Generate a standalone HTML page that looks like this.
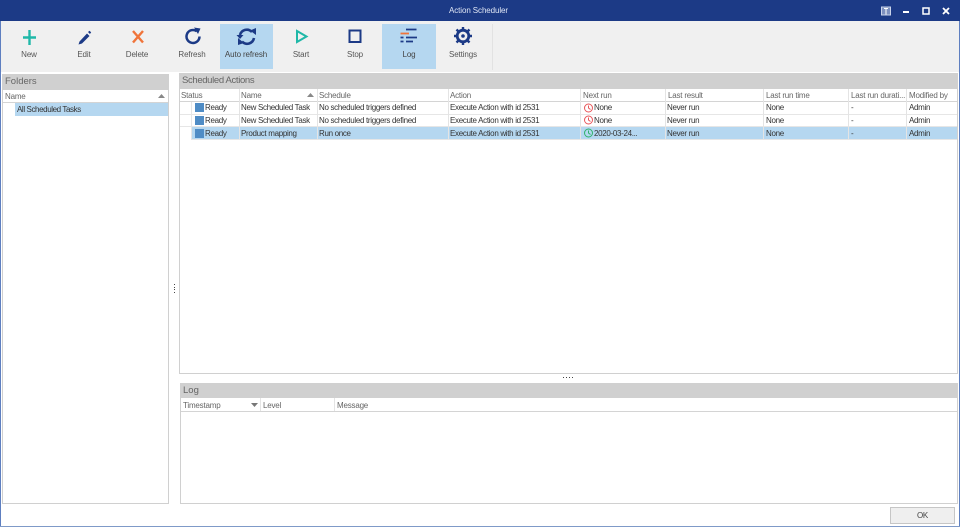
<!DOCTYPE html>
<html><head><meta charset="utf-8"><title>Action Scheduler</title>
<style>
html,body{margin:0;padding:0;background:#fff}
#p{position:relative;width:960px;height:527px;overflow:hidden;background:#fff;font:8px/12px "Liberation Sans",sans-serif;letter-spacing:-.32px;color:#333;filter:blur(.3px)}
#p div{position:absolute;white-space:nowrap}
#p svg{position:absolute;overflow:visible}
.tb{text-align:center;color:#555;top:49px;width:54px;height:12px;letter-spacing:-.12px}
.sel{background:#b5d7f0}
.hd{background:#d0d0d0;color:#666;font-size:9.5px;line-height:15px;padding-left:3px;letter-spacing:-.35px}
.c{color:#666;top:90px;height:12px;line-height:12px;letter-spacing:-.2px}
.v{width:1px;background:#e4e4e4}
.h{height:1px;background:#d4d4d4}
.r{color:#333}
.sq{background:#4f8cc5;width:9px;height:9px}
.line{position:absolute;border:1px solid #d0d0d0;box-sizing:border-box;background:#fff}
</style></head><body><div id="p">
<div style="left:0;top:0;width:960px;height:21px;background:#1c3a86"></div>
<div style="left:0;top:21px;width:1px;height:506px;background:#5e7fc0"></div>
<div style="left:959px;top:21px;width:1px;height:506px;background:#5e7fc0"></div>
<div style="left:0;top:526px;width:960px;height:1px;background:#7f9ac8"></div>
<div style="left:0;top:5px;width:957px;text-align:center;color:#dfe6f5;height:12px;letter-spacing:-.1px">Action Scheduler</div>

<svg width="960" height="21" style="left:0;top:0">
<rect x="881.500" y="7" width="9" height="8" fill="#7d90bf" stroke="#c9d3ea"/>
<path d="M886 8.500v6M884 8.500h4" stroke="#fff" fill="none"/>
<path d="M903 12h6" stroke="#fff" stroke-width="2" fill="none"/>
<rect x="923" y="8" width="6" height="6" fill="none" stroke="#fff" stroke-width="1.500"/>
<path d="M943 8l6 6M949 8l-6 6" stroke="#fff" stroke-width="1.800" fill="none"/>
</svg>

<div style="left:1px;top:21px;width:958px;height:51px;background:#f0f0f0"></div>
<div style="left:492px;top:24px;width:1px;height:46px;background:#e2e2e2"></div>
<div class="sel" style="left:220px;top:24px;width:53px;height:45px"></div>
<div class="sel" style="left:382px;top:24px;width:54px;height:45px"></div>

<svg width="500" height="50" style="left:0;top:22px">
<path d="M29.500 8v15M23 15.500h13" stroke="#1fb8a8" stroke-width="2.400" fill="none"/>
<path d="M79.500 19.500l7.500-8 2.500 2.500-7.500 7.500-3.500 1z" fill="#1c3a86"/><path d="M88 10l1.500-1.300 1.700 1.700-1.300 1.600z" fill="#1c3a86"/>
<path d="M133 9l10 11.500M143 9l-10 11.500" stroke="#f0743a" stroke-width="2.400" fill="none"/>
<path d="M199.500 14.500a6.500 6.500 0 1 1-2.700-5.300" stroke="#1c3a86" stroke-width="2.500" fill="none"/>
<path d="M194 5.500l6.500 1-2.500 5.500z" fill="#1c3a86"/>
<path d="M240 13a7 7 0 0 1 12-3M254 16a7 7 0 0 1-12 3.500" stroke="#1c3a86" stroke-width="2.600" fill="none"/>
<path d="M250 8.500l6-2.500v7zM244 21l-6 2v-7z" fill="#1c3a86"/>
<path d="M236.500 13l3.500 4 3.500-4z" fill="#1c3a86"/>
<path d="M297 9l9.500 5.500-9.500 5.500z" fill="none" stroke="#1fb8a8" stroke-width="2"/>
<rect x="349.500" y="8.500" width="11" height="11.500" fill="none" stroke="#1c3a86" stroke-width="2"/>
<path d="M406 7.500h10.500M406 15.500h11M406 19.500h7M400.500 15.500h3M400.500 19.500h3" stroke="#1c3a86" stroke-width="1.800" fill="none"/>
<path d="M400.500 11.500h8.500" stroke="#f0743a" stroke-width="1.800" fill="none"/>
<circle cx="463" cy="14" r="5.800" fill="none" stroke="#1c3a86" stroke-width="2.800"/>
<circle cx="463" cy="14" r="1.800" fill="#1c3a86"/>
<path d="M463 5v3M463 20v3M454 14h3M469 14h3M456.500 7.500l2 2M467.500 18.500l2 2M469.500 7.500l-2 2M458.500 18.500l-2 2" stroke="#1c3a86" stroke-width="2.400" fill="none"/>
</svg>
<div class="tb" style="left:2px">New</div>
<div class="tb" style="left:57px">Edit</div>
<div class="tb" style="left:110px">Delete</div>
<div class="tb" style="left:165px">Refresh</div>
<div class="tb" style="left:219px;color:#444">Auto refresh</div>
<div class="tb" style="left:274px">Start</div>
<div class="tb" style="left:328px">Stop</div>
<div class="tb" style="left:382px;color:#444">Log</div>
<div class="tb" style="left:436px">Settings</div>

<!-- Folders -->
<div class="line" style="left:2px;top:74px;width:167px;height:430px"></div>
<div class="hd" style="left:3px;top:74px;width:165px;height:16px;line-height:16px;padding-left:2px;box-sizing:border-box;letter-spacing:0">Folders</div>
<div class="c" style="left:5px;top:91px">Name</div>
<div class="h" style="left:3px;top:102px;width:165px"></div>
<svg width="8" height="5" style="left:158px;top:94px"><path d="M0 4h7L3.500 0z" fill="#888"/></svg>
<div class="sel r" style="left:15px;top:103px;width:153px;height:13px;line-height:13px;padding-left:2px;box-sizing:border-box;letter-spacing:-.4px">All Scheduled Tasks</div>

<!-- splitter dots -->
<div style="left:174px;top:284px;width:1px;height:1px;background:#444"></div>
<div style="left:174px;top:286.500px;width:1px;height:1px;background:#444"></div>
<div style="left:174px;top:289px;width:1px;height:1px;background:#444"></div>
<div style="left:174px;top:292px;width:1px;height:1px;background:#444"></div>
<div style="left:563px;top:377px;width:12px;height:1px;background:repeating-linear-gradient(90deg,#444 0 1px,transparent 1px 3px)"></div>

<!-- Scheduled Actions -->
<div class="line" style="left:179px;top:73px;width:779px;height:301px"></div>
<div class="hd" style="left:179px;top:73px;width:779px;height:16px;line-height:15px;box-sizing:border-box">Scheduled Actions</div>
<div class="h" style="left:180px;top:101px;width:777px"></div>
<div class="h" style="left:180px;top:114px;width:777px;background:#e6e6e6"></div>
<div class="h" style="left:180px;top:126px;width:777px;background:#e6e6e6"></div>
<div class="sel" style="left:191px;top:127px;width:766px;height:13px"></div>
<div class="h" style="left:191px;top:139px;width:766px;background:#e6e6e6"></div>

<div class="v" style="left:239px;top:89px;height:50px"></div>
<div class="v" style="left:317px;top:89px;height:50px"></div>
<div class="v" style="left:448px;top:89px;height:50px"></div>
<div class="v" style="left:580px;top:89px;height:50px"></div>
<div class="v" style="left:665px;top:89px;height:50px"></div>
<div class="v" style="left:763px;top:89px;height:50px"></div>
<div class="v" style="left:848px;top:89px;height:50px"></div>
<div class="v" style="left:906px;top:89px;height:50px"></div>
<div class="v" style="left:191px;top:102px;height:38px;background:#e6e6e6"></div>

<div class="c" style="left:181px">Status</div>
<div class="c" style="left:241px">Name</div>
<svg width="8" height="5" style="left:307px;top:93px"><path d="M0 4h7L3.500 0z" fill="#888"/></svg>
<div class="c" style="left:319px">Schedule</div>
<div class="c" style="left:450px">Action</div>
<div class="c" style="left:583px">Next run</div>
<div class="c" style="left:668px">Last result</div>
<div class="c" style="left:766px">Last run time</div>
<div class="c" style="left:851px">Last run durati...</div>
<div class="c" style="left:909px">Modified by</div>

<div class="sq" style="left:195px;top:103px"></div>
<div class="sq" style="left:195px;top:116px"></div>
<div class="sq" style="left:195px;top:129px"></div>

<div class="r" style="left:205px;top:102px">Ready</div>
<div class="r" style="left:241px;top:102px">New Scheduled Task</div>
<div class="r" style="left:319px;top:102px">No scheduled triggers defined</div>
<div class="r" style="left:450px;top:102px">Execute Action with id 2531</div>
<div class="r" style="left:594px;top:102px">None</div>
<div class="r" style="left:667px;top:102px">Never run</div>
<div class="r" style="left:766px;top:102px">None</div>
<div class="r" style="left:851px;top:102px">-</div>
<div class="r" style="left:909px;top:102px">Admin</div>

<div class="r" style="left:205px;top:115px">Ready</div>
<div class="r" style="left:241px;top:115px">New Scheduled Task</div>
<div class="r" style="left:319px;top:115px">No scheduled triggers defined</div>
<div class="r" style="left:450px;top:115px">Execute Action with id 2531</div>
<div class="r" style="left:594px;top:115px">None</div>
<div class="r" style="left:667px;top:115px">Never run</div>
<div class="r" style="left:766px;top:115px">None</div>
<div class="r" style="left:851px;top:115px">-</div>
<div class="r" style="left:909px;top:115px">Admin</div>

<div class="r" style="left:205px;top:128px">Ready</div>
<div class="r" style="left:241px;top:128px">Product mapping</div>
<div class="r" style="left:319px;top:128px">Run once</div>
<div class="r" style="left:450px;top:128px">Execute Action with id 2531</div>
<div class="r" style="left:594px;top:128px">2020-03-24...</div>
<div class="r" style="left:667px;top:128px">Never run</div>
<div class="r" style="left:766px;top:128px">None</div>
<div class="r" style="left:851px;top:128px">-</div>
<div class="r" style="left:909px;top:128px">Admin</div>

<svg width="12" height="12" style="left:583px;top:102px"><circle cx="5.500" cy="6" r="4" fill="none" stroke="#e8565a"/><path d="M5.500 3.500V6l2 1.500" fill="none" stroke="#e8565a"/></svg>
<svg width="12" height="12" style="left:583px;top:114px"><circle cx="5.500" cy="6" r="4" fill="none" stroke="#e8565a"/><path d="M5.500 3.500V6l2 1.500" fill="none" stroke="#e8565a"/></svg>
<svg width="12" height="12" style="left:583px;top:127px"><circle cx="5.500" cy="6" r="4" fill="none" stroke="#2fb36a"/><path d="M5.500 3.500V6l2 1.500" fill="none" stroke="#2fb36a"/></svg>

<!-- Log -->
<div class="line" style="left:180px;top:383px;width:778px;height:121px"></div>
<div class="hd" style="left:180px;top:383px;width:778px;height:15px;line-height:15px;box-sizing:border-box;letter-spacing:0">Log</div>
<div class="h" style="left:181px;top:411px;width:776px"></div>
<div class="v" style="left:260px;top:398px;height:13px"></div>
<div class="v" style="left:334px;top:398px;height:13px"></div>
<div class="c" style="left:183px;top:400px">Timestamp</div>
<svg width="8" height="5" style="left:251px;top:403px"><path d="M0 0h7L3.500 4z" fill="#777"/></svg>
<div class="c" style="left:263px;top:400px">Level</div>
<div class="c" style="left:337px;top:400px">Message</div>

<div style="left:890px;top:507px;width:65px;height:17px;box-sizing:border-box;border:1px solid #c6c6c6;background:#efefef;text-align:center;line-height:16px;color:#444">OK</div>
</div></body></html>
